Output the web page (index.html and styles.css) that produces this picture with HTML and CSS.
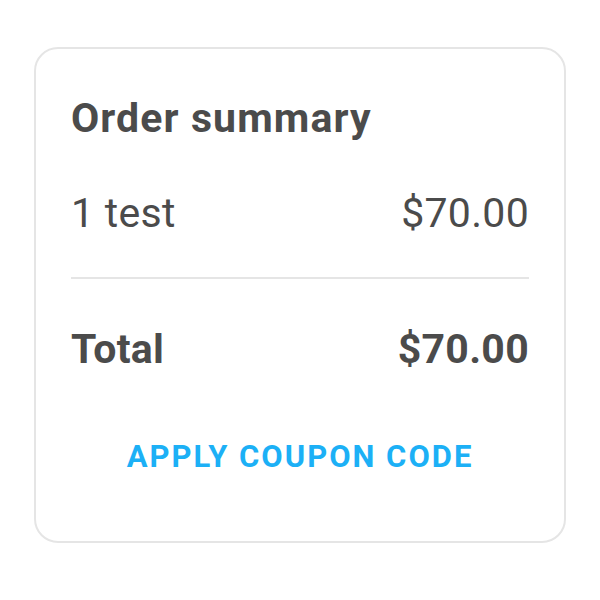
FILE: index.html
```html
<!DOCTYPE html>
<html lang="en">

<head>
    <meta charset="UTF-8">
    <meta name="viewport" content="width=device-width, initial-scale=1.0">
    <title>Order summary</title>
    <link rel="stylesheet" href="styles.css">
</head>

<body>
    <div class="summary-card">
        <h2 class="summary-title">Order summary</h2>
        <div class="summary-row item-row">
            <span>1 test</span>
            <span>$70.00</span>
        </div>
        <hr class="summary-divider">
        <div class="summary-row total-row">
            <span>Total</span>
            <span>$70.00</span>
        </div>
        <button class="coupon-button" type="button">Apply coupon code</button>
    </div>
</body>

</html>
```

FILE: styles.css
```css
body {
    font-family: Roboto, "Liberation Sans", sans-serif;
    background-color: #fff;
    margin: 0;
    padding: 47px 34px 57px;
    color: #4b4b4b;
}

.summary-card {
    height: 496px;
    box-sizing: border-box;
    border: 2px solid #e5e5e5;
    border-radius: 24px;
    padding: 45px 35px 0;
    display: flex;
    flex-direction: column;
}

.summary-title {
    margin: 0;
    font-size: 41px;
    font-weight: 700;
    line-height: 48px;
    letter-spacing: 1.1px;
}

.summary-row {
    display: flex;
    justify-content: space-between;
    font-size: 41px;
    line-height: 48px;
    letter-spacing: 0.3px;
}

.item-row {
    margin-top: 47px;
}

.summary-divider {
    border: none;
    height: 2px;
    background-color: #e5e5e5;
    margin: 40px 0 0;
}

.total-row {
    margin-top: 46px;
    font-weight: 700;
}

.coupon-button {
    margin-top: 65px;
    align-self: center;
    background: none;
    border: none;
    padding: 0;
    font-family: inherit;
    font-size: 31px;
    font-weight: 700;
    letter-spacing: 2px;
    text-transform: uppercase;
    color: #1cb0f6;
    cursor: pointer;
}
```
